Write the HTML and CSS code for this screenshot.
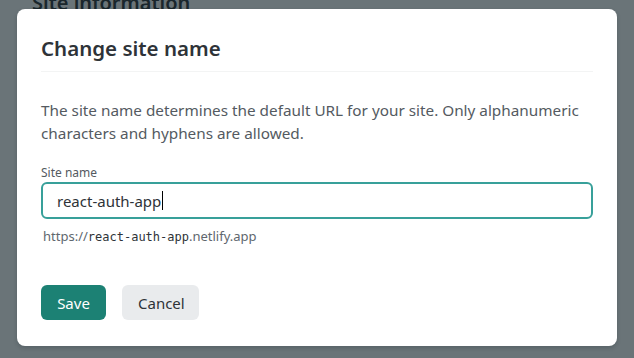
FILE: index.html
```html
<!DOCTYPE html>
<html>
<head>
<meta charset="utf-8">
<link rel="stylesheet" href="styles.css">
</head>
<body>
<div class="page">
  <h2 class="page-title">Site information</h2>
</div>
<div class="backdrop"></div>
<div class="modal">
  <h1 class="modal-title">Change site name</h1>
  <div class="modal-body">
    <p class="desc">The site name determines the default URL for your site. Only alphanumeric characters and hyphens are allowed.</p>
    <label class="label">Site name</label>
    <div class="input"><span>react-auth-app</span><span class="caret"></span></div>
    <div class="hint">https://<code>react-auth-app</code>.netlify.app</div>
    <div class="actions">
      <button class="btn btn-primary">Save</button>
      <button class="btn btn-secondary">Cancel</button>
    </div>
  </div>
</div>
</body>
</html>
```
FILE: styles.css
```css
html, body { margin: 0; padding: 0; }
body {
  width: 634px; height: 358px; overflow: hidden;
  font-family: "Noto Sans", "Open Sans", sans-serif;
  background: #fff;
  position: relative;
}
.page { padding: 0 32px; }
.page-title {
  margin: -10px 0 0; font-size: 20px; line-height: 26px; font-weight: 600; color: #2e3338;
}
.backdrop {
  position: absolute; inset: 0; background: rgba(14, 30, 37, 0.62);
}
.modal {
  position: absolute; left: 17px; top: 9px; width: 600px; height: 337px;
  box-sizing: border-box;
  background: #fff; border-radius: 8px;
  padding: 25px 24px 0;
  box-shadow: 0 2px 4px rgba(14,30,37,.2);
}
.modal-title {
  margin: 0; font-size: 20.5px; line-height: 28px; font-weight: 600; color: #2e3338;
  padding-bottom: 9px; border-bottom: 1px solid #f3f4f4;
}
.modal-body { padding-top: 27px; }
.desc {
  margin: 0; font-size: 15.3px; line-height: 23px; color: #545a61;
}
.label {
  display: block; margin-top: 20px; font-size: 12px; line-height: 16px; color: #545a61;
}
.input {
  margin-top: 1px; height: 37px; box-sizing: border-box;
  border: 2px solid #38a09a; border-radius: 6px;
  padding: 0 14px; display: flex; align-items: center;
  font-size: 15px; color: #2e3338;
}
.caret { display: inline-block; width: 1px; height: 19px; background: #000; margin-left: 1px; }
.hint { margin-top: 8px; padding-left: 2px; font-size: 13px; line-height: 18px; color: #60676e; }
.hint code { font-family: "DejaVu Sans Mono", monospace; font-size: 12px; color: #2e3338; }
.actions { margin-top: 39px; display: flex; gap: 16px; }
.btn {
  height: 35px; border: 0; border-radius: 6px; font-family: inherit; font-size: 15px; padding: 0 16px;
}
.btn-primary { background: #1c8174; color: #fff; width: 65px; }
.btn-secondary { background: #e9ebed; color: #2e3338; width: 77px; }
```
